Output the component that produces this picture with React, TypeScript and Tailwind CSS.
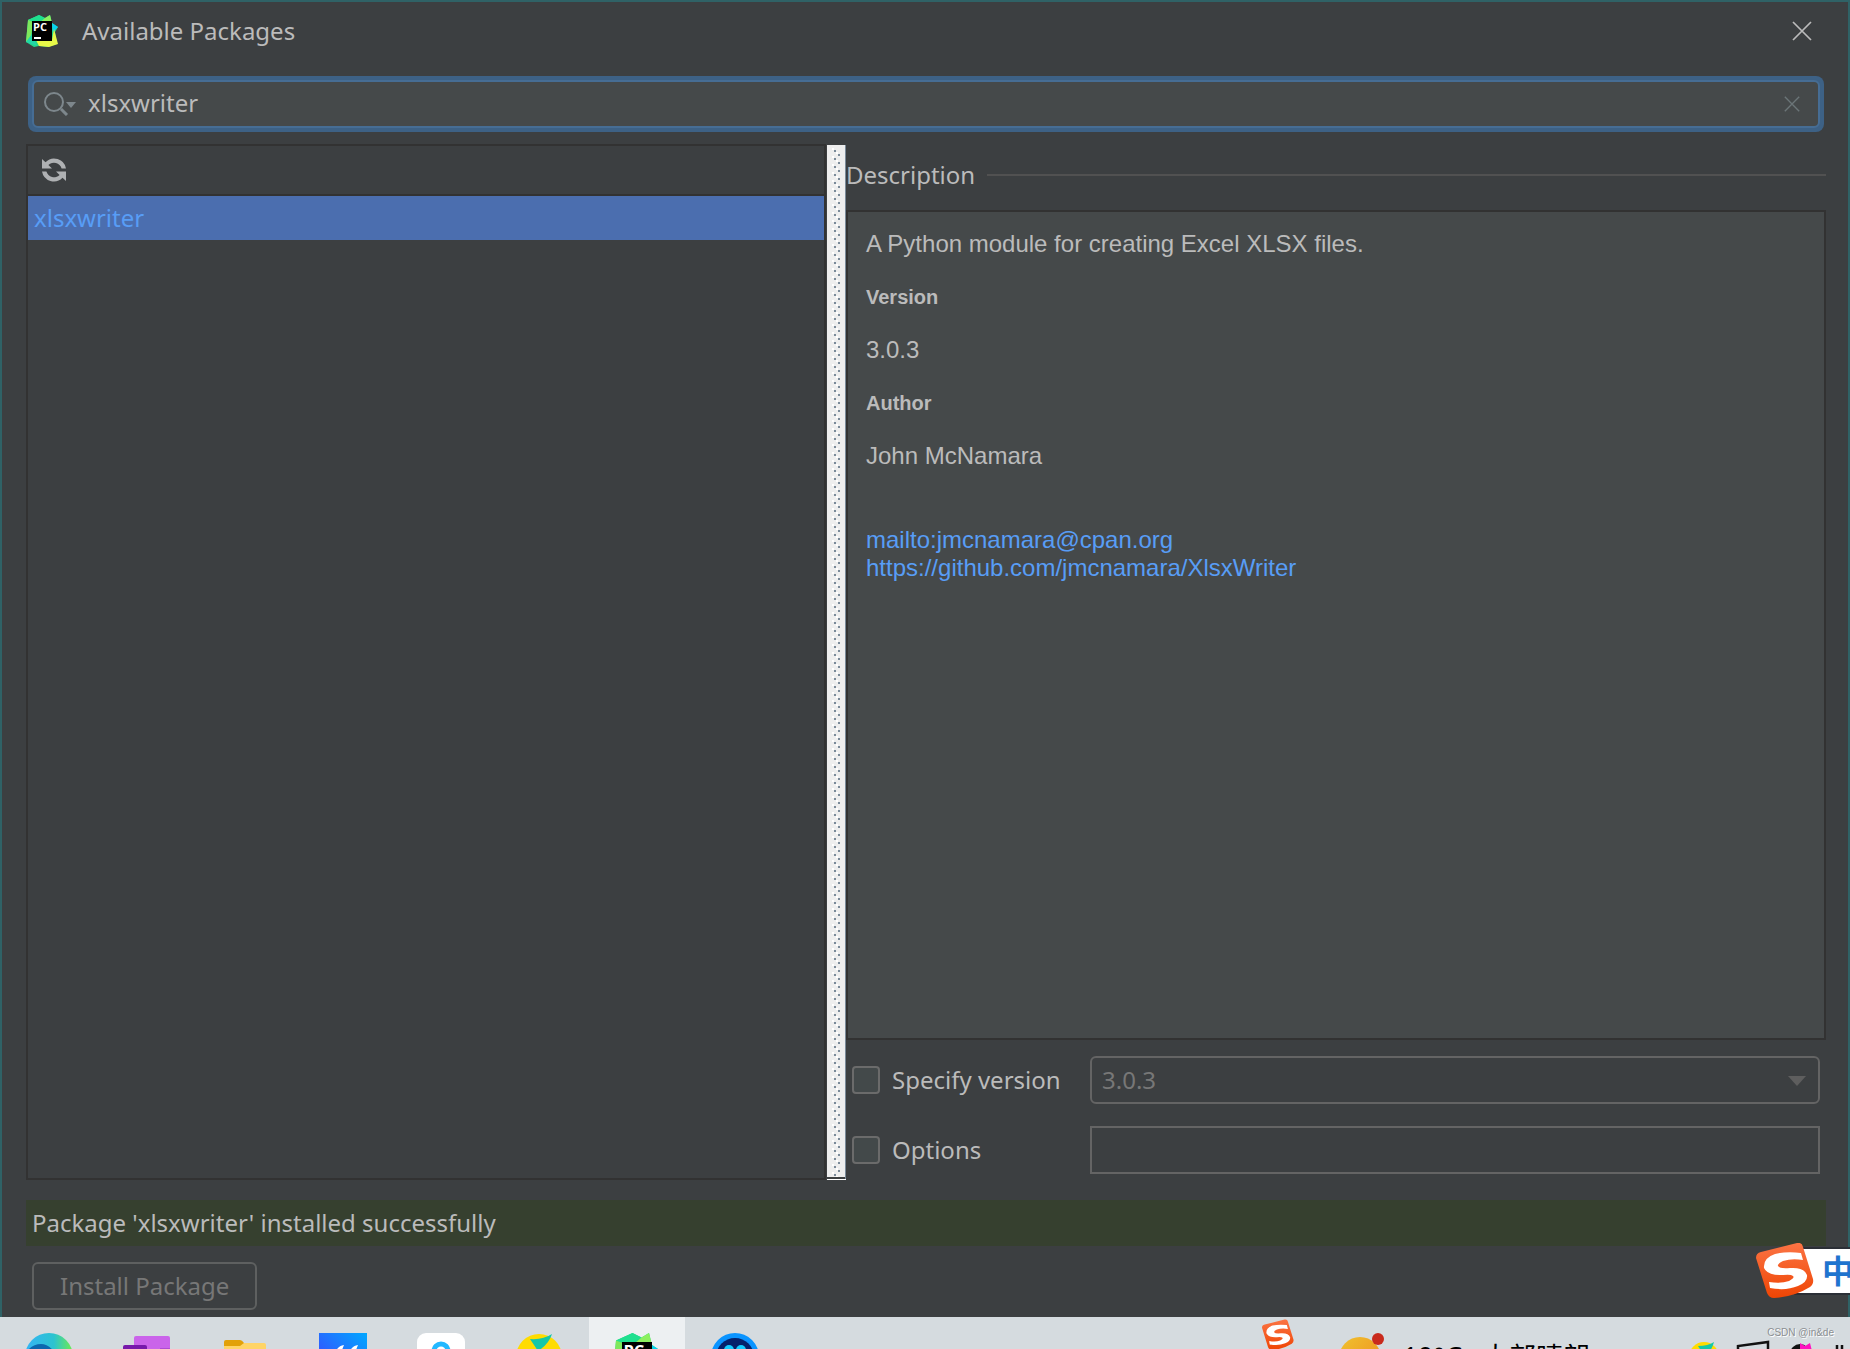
import type { ReactNode } from "react";

const UI = "font-['Noto_Sans','Noto_Sans_CJK_SC',sans-serif]";

type IconProps = { className?: string };

function PyCharmLogo({ className }: IconProps) {
  return (
    <svg viewBox="0 0 32 32" className={className} aria-hidden="true">
      <path d="M2 5 13 0l6 3 5-3 2 8 6 4-3 5 2 12-9 3-9-1-5 1-8-5Z" fill="#21d789" />
      <path d="M2 5 8 3 5 21 0 27Z" fill="#7fe85c" />
      <path d="M13 0l6 3-9 5-8-3Z" fill="#1fe08f" />
      <path d="M19 3l5-3 2 8H13Z" fill="#8df05f" />
      <path d="M26 8l6 4-5 5Z" fill="#07d3f2" />
      <path d="M28 14l4 15-9 3-10-1-3-6 16 0Z" fill="#e8f948" />
      <path d="M0 27l6-8 5 12Z" fill="#22d7a8" />
      <path d="M6 6h20v20H6Z" fill="#000" />
      <path d="M8 22h7v2H8Z" fill="#fff" />
      <text x="7" y="16" fontSize="11" fontWeight="700" fontFamily="Open Sans, sans-serif" fill="#fff">
        PC
      </text>
    </svg>
  );
}

function SogouLogo({ className }: IconProps) {
  return (
    <svg viewBox="0 0 58 56" className={className} aria-hidden="true">
      <defs>
        <linearGradient id="sogou" x1="0" y1="0" x2="0" y2="1">
          <stop offset="0" stopColor="#fb7444" />
          <stop offset="1" stopColor="#ef4504" />
        </linearGradient>
      </defs>
      <path d="M5 9 41 0q5-1 6 4l10 32q1 5-3 8-16 10-36 11-5 0-7-5L0 15q0-5 5-6Z" fill="url(#sogou)" />
      <path
        d="M45 10 47 17Q36 15 27 18q-6 3-5 5 2 3 12 2 14-1 17 7 1 7-9 11-12 5-28 2l-1-6q12 2 20-1 6-3 4-5-2-2-10-1Q12 33 8 25 7 15 19 11q12-3 26-1Z"
        fill="#fff"
      />
    </svg>
  );
}

function SearchIcon({ className }: IconProps) {
  return (
    <svg viewBox="0 0 32 24" className={className} aria-hidden="true">
      <circle cx="10" cy="10" r="9" fill="none" stroke="#7d878c" strokeWidth="2" />
      <path d="M17 17l6 6" stroke="#7d878c" strokeWidth="3" />
      <path d="M22 10h10l-5 6Z" fill="#7d878c" />
    </svg>
  );
}

function RefreshIcon({ className }: IconProps) {
  return (
    <svg viewBox="0 0 24 24" className={className} fill="#afb1b3" aria-hidden="true">
      <path d="M0 1 3.5 4.3A12 12 0 0 1 24 10.5H19.6A8 8 0 0 0 6.4 7L10 10.5H0Z" />
      <path d="M24 23 20.5 19.7A12 12 0 0 1 0 13.5H4.4A8 8 0 0 0 17.6 17L14 13.5H24Z" />
    </svg>
  );
}

function Cross({ className }: IconProps) {
  return (
    <svg viewBox="0 0 20 20" className={className} fill="none" stroke="currentColor" strokeWidth="1.7" aria-hidden="true">
      <path d="M1 1l18 18M19 1 1 19" />
    </svg>
  );
}

/** Divider between the two panes, with the bumpy drag texture. */
function Splitter() {
  return (
    <div className="ml-px flex w-[19px] shrink-0 flex-col border-b border-b-white pt-px">
      <div className="flex grow border-r border-r-white">
        <div className="mb-0.5 grow bg-[#eeeeee]">
          <svg className="size-full" aria-hidden="true">
            <defs>
              <pattern id="bumps" width="16" height="8" patternUnits="userSpaceOnUse">
                <path d="M5 3h2v2H5ZM9 7h2v1H9ZM9 0h2v1H9Z" fill="#fff" />
                <path d="M7 5h2v2H7ZM11 1h2v2h-2Z" fill="#7a8a99" />
              </pattern>
            </defs>
            <rect y="3" width="16" height="100%" fill="url(#bumps)" />
          </svg>
        </div>
        <div className="w-0.5 bg-[#7a8a99]" />
      </div>
    </div>
  );
}

/** A checkbox with its label, followed by the field that it enables. */
function OptionRow({ id, label, children }: { id: string; label: string; children: ReactNode }) {
  return (
    <div className="flex h-12 items-center">
      <div className="flex w-[238px] shrink-0 items-center gap-3">
        <input
          id={id}
          type="checkbox"
          className="size-7 appearance-none rounded border-2 border-[#6b6b6b] bg-[#43494a]"
        />
        <label htmlFor={id}>{label}</label>
      </div>
      {children}
    </div>
  );
}

function TaskItem({ active, children }: { active?: boolean; children: ReactNode }) {
  return (
    <div className="flex w-[98px] shrink-0 justify-center px-px">
      <div className={active ? "flex grow justify-center bg-[#edf0f2] pt-4" : "flex grow justify-center pt-4"}>
        {children}
      </div>
    </div>
  );
}

function Taskbar() {
  return (
    <footer className="flex h-8 items-start overflow-hidden bg-[#d5dbdf] text-black">
      <TaskItem>
        <svg viewBox="0 0 48 48" className="size-12" aria-hidden="true">
          <defs>
            <linearGradient id="edge" x1="0" x2="1">
              <stop offset="0" stopColor="#35b4f5" />
              <stop offset="0.6" stopColor="#2cc3d0" />
              <stop offset="1" stopColor="#6fec4e" />
            </linearGradient>
          </defs>
          <circle cx="24" cy="24" r="24" fill="url(#edge)" />
          <path d="M2 18Q8 11 16 11t15 10H2Z" fill="#0c67ae" />
        </svg>
      </TaskItem>
      <TaskItem>
        <svg viewBox="0 0 48 48" className="size-12" aria-hidden="true">
          <rect x="11" y="3" width="36" height="42" rx="2" fill="#ca64ea" />
          <path d="M37 15h10v10H37Z" fill="#ae4bd5" />
          <rect y="12" width="24" height="24" rx="2" fill="#7719aa" />
        </svg>
      </TaskItem>
      <TaskItem>
        <svg viewBox="0 0 48 48" className="size-12" aria-hidden="true">
          <path d="M3 9q0-2 2-2h14q2 0 4 3l3 5v20H3Z" fill="#e2a108" />
          <path d="M3 13h16l4-3h20q2 0 2 2v30H3Z" fill="#ffd466" />
        </svg>
      </TaskItem>
      <TaskItem>
        <svg viewBox="0 0 48 48" className="size-12" aria-hidden="true">
          <defs>
            <linearGradient id="quote" x1="0" y1="1" x2="1" y2="0">
              <stop offset="0" stopColor="#4438ff" />
              <stop offset="1" stopColor="#00a8ff" />
            </linearGradient>
          </defs>
          <path d="M0 0h48v48H0Z" fill="url(#quote)" />
          <path d="M25 12Q17 13 15 24h8V17ZM39 12Q31 13 29 24h8V17Z" fill="#fff" />
        </svg>
      </TaskItem>
      <TaskItem>
        <svg viewBox="0 0 48 48" className="size-12" aria-hidden="true">
          <rect width="48" height="48" rx="9" fill="#fff" />
          <circle cx="24" cy="18" r="7" fill="none" stroke="#22b8ff" strokeWidth="5" />
        </svg>
      </TaskItem>
      <TaskItem>
        <svg viewBox="0 0 48 48" className="size-12" aria-hidden="true">
          <circle cx="24" cy="24" r="23" fill="#ffdc00" />
          <path d="M15 6Q28 7 37 1 34 11 23 18Z" fill="#14c8a8" />
        </svg>
      </TaskItem>
      <TaskItem active>
        <PyCharmLogo className="size-12" />
      </TaskItem>
      <TaskItem>
        <svg viewBox="0 0 48 48" className="size-12" aria-hidden="true">
          <circle cx="24" cy="24" r="24" fill="#0a94ff" />
          <circle cx="24" cy="24" r="19" fill="#04216b" />
          <circle cx="18" cy="17" r="5" fill="#12ccff" />
          <circle cx="30" cy="17" r="5" fill="#12ccff" />
        </svg>
      </TaskItem>

      <div className="mr-0.5 ml-auto flex items-start">
        <SogouLogo className="mt-0.5 size-8" />
        <svg viewBox="0 0 48 32" className="ml-11 mt-4 h-8 w-12" aria-hidden="true">
          <defs>
            <linearGradient id="sun" x1="0" y1="0" x2="1" y2="1">
              <stop offset="0" stopColor="#efc22f" />
              <stop offset="1" stopColor="#f08a1c" />
            </linearGradient>
          </defs>
          <circle cx="22" cy="25" r="21" fill="url(#sun)" />
          <circle cx="40" cy="6" r="6" fill="#c92a1c" />
        </svg>
        <p className="ml-4 mt-6 flex gap-5 whitespace-nowrap text-[27px] leading-8">
          <span>19°C</span>
          <span>大部晴朗</span>
        </p>
        <svg viewBox="0 0 160 24" className="ml-[98px] mt-5 h-6 w-40 shrink-0" aria-hidden="true">
          <circle cx="16" cy="20" r="15" fill="#ffdc00" />
          <path d="M10 9Q20 9 26 5 24 13 17 20Z" fill="#14c8a8" />
          <path d="M50 24V9l30-4v19" fill="none" stroke="#111" strokeWidth="2.5" />
          <circle cx="112" cy="17" r="10" fill="#111" />
          <path d="M112 6l5 3 5-3 2 8-6 3-6-4Z" fill="#ff12c0" />
          <path d="M149 8v16M154 8v16" stroke="#111" strokeWidth="2.5" />
        </svg>
      </div>
    </footer>
  );
}

export default function App() {
  return (
    <div className={`relative flex min-h-screen flex-col overflow-hidden bg-[#3c3f41] text-2xl text-[#bbbbbb] ${UI}`}>
      <main className="flex grow flex-col border-x-2 border-t-2 border-[#2f6266] pr-[22px] pb-[7px] pl-6">
        <header className="flex h-[58px] items-center">
          <PyCharmLogo className="size-8" />
          <h1 className="ml-6">Available Packages</h1>
          <button type="button" aria-label="Close" className="ml-auto mr-3.5">
            <Cross className="size-5" />
          </button>
        </header>

        <div className="mx-0.5 mt-4 rounded-lg bg-[#3d6185] p-1">
          <div className="flex h-12 items-center rounded-md border-2 border-[#466d94] bg-[#45494a] pl-2.5 pr-[18px]">
            <SearchIcon className="h-6 w-8 shrink-0" />
            <input
              type="text"
              aria-label="Search packages"
              defaultValue="xlsxwriter"
              className="ml-3 min-w-0 grow bg-transparent pb-0.5 outline-none"
            />
            <button type="button" aria-label="Clear search" className="text-[#6b7578]">
              <Cross className="size-4" />
            </button>
          </div>
        </div>

        <div className="mt-3 flex grow">
          <section className="flex w-4/9 shrink-0 flex-col border-2 border-[#323232]">
            <div className="flex h-[50px] items-center border-b-2 border-[#323232] px-3.5">
              <button type="button" aria-label="Reload list">
                <RefreshIcon className="size-6" />
              </button>
            </div>
            <ul>
              <li>
                <button
                  type="button"
                  className="flex h-11 w-full items-center bg-[#4b6eaf] px-1.5 text-[#589df6]"
                >
                  xlsxwriter
                </button>
              </li>
            </ul>
          </section>

          <Splitter />

          <section className="flex min-w-0 grow flex-col">
            <div className="flex h-[62px] items-center gap-3">
              <h2>Description</h2>
              <div className="h-0.5 grow bg-[#515151]" />
            </div>

            <div className="mt-1 flex grow flex-col gap-[25px] border-2 border-[#323232] bg-[#45494a] px-[18px] pt-[18px] font-['Liberation_Sans',sans-serif] leading-7">
              <p>A Python module for creating Excel XLSX files.</p>
              <h3 className="text-xl leading-7 font-bold">Version</h3>
              <p>3.0.3</p>
              <h3 className="text-xl leading-7 font-bold">Author</h3>
              <p>John McNamara</p>
              <p className="mt-[31px] flex flex-col items-start text-[#589df6]">
                <a href="mailto:jmcnamara@cpan.org">mailto:jmcnamara@cpan.org</a>
                <a href="https://github.com/jmcnamara/XlsxWriter">https://github.com/jmcnamara/XlsxWriter</a>
              </p>
            </div>

            <div className="mt-4 flex flex-col gap-[22px] px-1.5 pb-1.5">
              <OptionRow id="specify-version" label="Specify version">
                <div className="relative h-12 grow">
                  <select
                    aria-label="Version"
                    disabled
                    className="size-full appearance-none rounded-md border-2 border-[#646464] pl-2.5 text-[#777777]"
                  >
                    <option>3.0.3</option>
                  </select>
                  <svg
                    viewBox="0 0 18 10"
                    className="pointer-events-none absolute top-5 right-3.5 h-2.5 w-[18px]"
                    aria-hidden="true"
                  >
                    <path d="M0 0h18L9 10Z" fill="#5e5e5e" />
                  </svg>
                </div>
              </OptionRow>
              <OptionRow id="options" label="Options">
                <input
                  type="text"
                  aria-label="Options value"
                  disabled
                  className="h-12 min-w-0 grow border-2 border-[#646464] px-2.5"
                />
              </OptionRow>
            </div>
          </section>
        </div>

        <p className="mt-5 flex h-[46px] items-center bg-[#36402f] px-1.5">
          Package 'xlsxwriter' installed successfully
        </p>
        <button
          type="button"
          disabled
          className="mt-4 ml-1.5 h-12 self-start rounded-md border-2 border-[#5e6060] px-[26px] text-[#777777]"
        >
          Install Package
        </button>
      </main>

      <Taskbar />

      {/* input method bar, hangs off the right edge of the screen */}
      <div className="absolute -right-3 bottom-[50px] flex h-14 items-center">
        <SogouLogo className="z-10 h-14 w-[58px]" />
        <div className="-ml-5 flex h-12 items-center border-y-2 border-[#2b2f36] bg-white pr-2 pl-7 text-[32px] leading-8 font-bold text-[#1f74cf]">
          中
        </div>
      </div>

      <p className="absolute right-4 bottom-2 font-['Liberation_Sans',sans-serif] text-[10px] leading-4 text-[#8b8f92] [text-shadow:1px_1px_0_#fff]">
        CSDN @in&amp;de
      </p>
    </div>
  );
}
